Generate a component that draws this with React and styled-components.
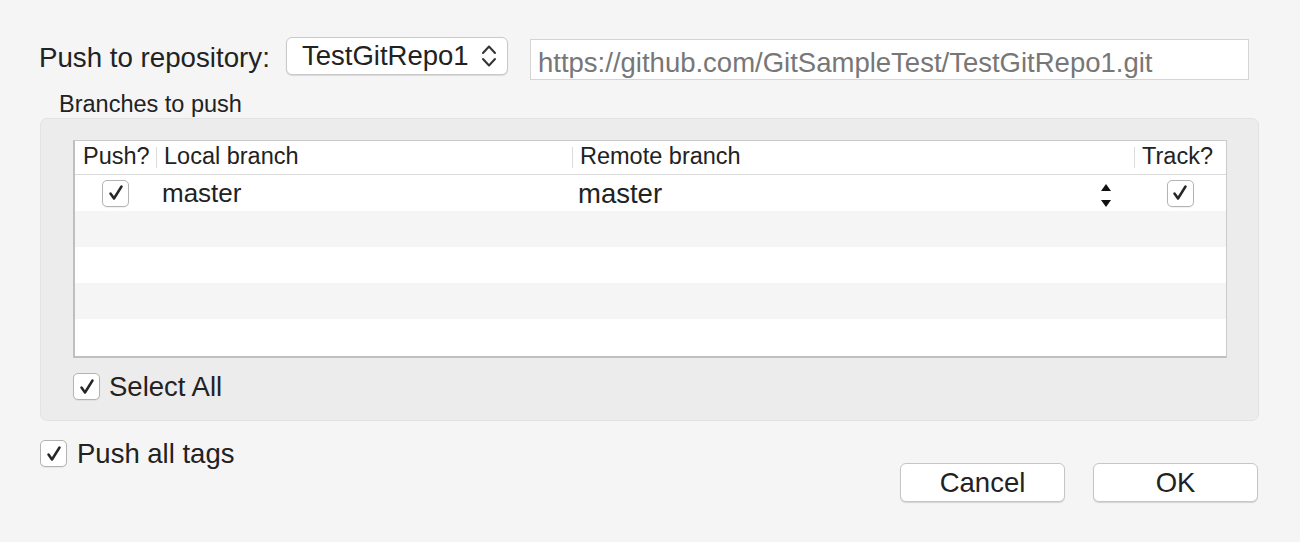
import styled, { createGlobalStyle } from 'styled-components';

const GlobalStyle = createGlobalStyle`
  html, body {
    margin: 0;
    background: #f5f5f5;
  }
  body {
    font-family: 'Liberation Sans', Arial, sans-serif;
    color: #222;
  }
`;

const rows = [
  { local: 'master', remote: 'master', push: true, track: true },
  null,
  null,
  null,
  null,
];

function Check() {
  return (
    <svg width="26" height="26" viewBox="0 0 26 26">
      <path d="M7.5 13.5 L11 18.5 L18.5 6.5" fill="none" stroke="#262626" strokeWidth="2.5" strokeLinecap="round" strokeLinejoin="round" />
    </svg>
  );
}

function Chevrons() {
  return (
    <svg width="18" height="28" viewBox="0 0 18 28">
      <path d="M3 11 L9 4.5 L15 11" fill="none" stroke="#333" strokeWidth="2" strokeLinecap="round" strokeLinejoin="round" />
      <path d="M3 17 L9 23.5 L15 17" fill="none" stroke="#333" strokeWidth="2" strokeLinecap="round" strokeLinejoin="round" />
    </svg>
  );
}

function Stepper() {
  return (
    <svg width="12" height="26" viewBox="0 0 12 26">
      <path d="M1 8 L6 1 L11 8 Z" fill="#111" />
      <path d="M1 17 L11 17 L6 24 Z" fill="#111" />
    </svg>
  );
}

function App() {
  return (
    <>
      <GlobalStyle />
      <Dialog>
        <RepoRow>
          <RepoLabel>Push to repository:</RepoLabel>
          <Popup>
            <span>TestGitRepo1</span>
            <Chevrons />
          </Popup>
          <UrlField>https://github.com/GitSampleTest/TestGitRepo1.git</UrlField>
        </RepoRow>

        <GroupTitle>Branches to push</GroupTitle>
        <GroupBox>
          <Table>
            <HeaderRow>
              <HeadCell $first>Push?</HeadCell>
              <HeadCell>Local branch</HeadCell>
              <HeadCell>Remote branch</HeadCell>
              <HeadCell>Track?</HeadCell>
            </HeaderRow>
            {rows.map((r, i) => (
              <Row key={i} $striped={i % 2 === 1} $last={i === rows.length - 1}>
                <CheckCell>{r && <Box><Check /></Box>}</CheckCell>
                <LocalCell>{r && r.local}</LocalCell>
                <RemoteCell>
                  {r && (
                    <>
                      <span>{r.remote}</span>
                      <Stepper />
                    </>
                  )}
                </RemoteCell>
                <CheckCell>{r && <Box><Check /></Box>}</CheckCell>
              </Row>
            ))}
          </Table>
          <CheckRow $inset>
            <Box><Check /></Box>
            <span>Select All</span>
          </CheckRow>
        </GroupBox>

        <Footer>
          <CheckRow>
            <Box><Check /></Box>
            <span>Push all tags</span>
          </CheckRow>
          <Buttons>
            <Button>Cancel</Button>
            <Button>OK</Button>
          </Buttons>
        </Footer>
      </Dialog>
    </>
  );
}

const Dialog = styled.div`
  width: 1300px;
  height: 542px;
  box-sizing: border-box;
  padding: 37px 41px 0 39px;
`;

const RepoRow = styled.div`
  display: flex;
  align-items: flex-start;
  height: 43px;
`;

const RepoLabel = styled.div`
  width: 247px;
  margin-top: 2px;
  font-size: 27.7px;
  line-height: 37px;
  white-space: nowrap;
`;

const Popup = styled.div`
  width: 222px;
  height: 38px;
  box-sizing: border-box;
  display: flex;
  align-items: center;
  justify-content: space-between;
  padding: 0 9px 0 15px;
  background: #fff;
  border: 1px solid #c9c9c9;
  border-radius: 6px;
  box-shadow: 0 1px 1px rgba(0, 0, 0, 0.12);
  font-size: 27.5px;
`;

const UrlField = styled.div`
  margin-left: 22px;
  margin-top: 2px;
  width: 719px;
  height: 41px;
  box-sizing: border-box;
  padding: 5px 0 0 7px;
  background: #fff;
  border: 1px solid #d4d4d4;
  color: #777;
  font-size: 27.5px;
  line-height: 36px;
  white-space: nowrap;
`;

const GroupTitle = styled.div`
  margin: 11px 0 0 20px;
  font-size: 23.5px;
  line-height: 27px;
`;

const GroupBox = styled.div`
  margin-left: 1px;
  width: 1219px;
  height: 303px;
  box-sizing: border-box;
  padding: 21px 32px 0 32px;
  background: #ececec;
  border: 1px solid #e2e2e2;
  border-radius: 7px;
`;

const Table = styled.div`
  width: 1154px;
  box-sizing: border-box;
  background: #fff;
  border: 1px solid #cacaca;
  border-left: 2px solid #bfbfbf;
  border-bottom: 2px solid #bfbfbf;
`;

const columns = '81px 416px 562px 1fr';

const HeaderRow = styled.div`
  display: grid;
  grid-template-columns: ${columns};
  height: 33px;
  border-bottom: 1px solid #dadada;
`;

const HeadCell = styled.div`
  display: flex;
  align-items: center;
  padding-left: 8px;
  padding-bottom: 2px;
  font-size: 23.5px;
  position: relative;
  &::before {
    content: '';
    display: ${p => (p.$first ? 'none' : 'block')};
    position: absolute;
    left: 0;
    top: 6px;
    bottom: 6px;
    width: 1px;
    background: #dcdcdc;
  }
`;

const Row = styled.div`
  display: grid;
  grid-template-columns: ${columns};
  height: ${p => (p.$last ? '37px' : '36px')};
  background: ${p => (p.$striped ? '#f5f5f5' : '#fff')};
`;

const CheckCell = styled.div`
  display: flex;
  align-items: center;
  justify-content: center;
`;

const LocalCell = styled.div`
  display: flex;
  align-items: center;
  padding-left: 6px;
  font-size: 26px;
`;

const RemoteCell = styled.div`
  display: flex;
  align-items: center;
  justify-content: space-between;
  padding: 2px 22px 0 6px;
  font-size: 27.5px;
  svg {
    margin-top: 3px;
  }
`;

const Box = styled.div`
  width: 27px;
  height: 27px;
  box-sizing: border-box;
  display: flex;
  align-items: center;
  justify-content: center;
  background: #fff;
  border: 1px solid #b3b3b3;
  border-radius: 5px;
  box-shadow: 0 1px 1px rgba(0, 0, 0, 0.06);
  flex-shrink: 0;
  svg {
    margin: -1px;
  }
`;

const CheckRow = styled.div`
  display: flex;
  align-items: center;
  gap: ${p => (p.$inset ? '9px' : '10px')};
  margin-top: ${p => (p.$inset ? '15px' : '0')};
  height: 27px;
  font-size: 27.5px;
  line-height: 27px;
  span {
    padding-bottom: 1px;
  }
`;

const Footer = styled.div`
  display: flex;
  justify-content: space-between;
  align-items: flex-start;
  margin: 19px 1px 0 1px;
`;

const Buttons = styled.div`
  display: flex;
  gap: 28px;
  margin-top: 23px;
`;

const Button = styled.div`
  width: 165px;
  height: 39px;
  box-sizing: border-box;
  display: flex;
  align-items: center;
  justify-content: center;
  background: #fff;
  border: 1px solid #c6c6c6;
  border-radius: 6px;
  box-shadow: 0 1px 1px rgba(0, 0, 0, 0.14);
  font-size: 27.5px;
`;

export default App;
